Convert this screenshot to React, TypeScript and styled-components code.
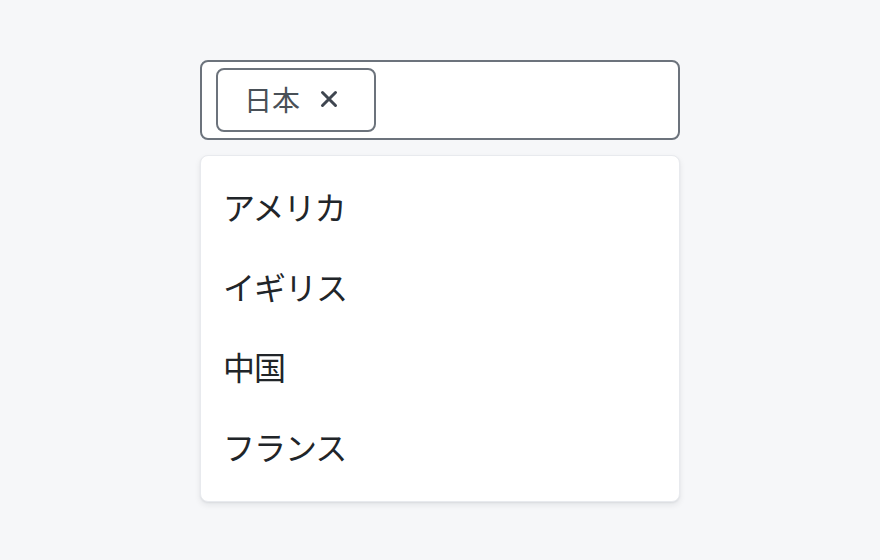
import styled, { createGlobalStyle } from "styled-components";

const GlobalStyle = createGlobalStyle`
  html, body {
    margin: 0;
    padding: 0;
    background: #f6f7f9;
    font-family: "Noto Sans CJK JP", "Noto Sans", sans-serif;
  }
`;

const Page = styled.div`
  width: 880px;
  height: 560px;
  display: flex;
  flex-direction: column;
  align-items: center;
  padding-top: 60px;
  box-sizing: border-box;
`;

const Field = styled.div`
  width: 480px;
  height: 80px;
  box-sizing: border-box;
  border: 2px solid #6c737c;
  border-radius: 8px;
  background: #fff;
  padding: 6px 14px;
  display: flex;
  align-items: center;
  gap: 8px;
`;

const Tag = styled.div`
  width: 160px;
  height: 64px;
  box-sizing: border-box;
  border: 2px solid #6c737c;
  border-radius: 8px;
  display: flex;
  align-items: center;
  padding: 0 0 2px 26px;
  gap: 19px;
  color: #495057;
  font-size: 28px;
`;

const Remove = styled.span`
  display: flex;
  align-items: center;
  color: #3f4650;
  cursor: pointer;
`;

const Menu = styled.ul`
  list-style: none;
  margin: 15px 0 0;
  width: 480px;
  box-sizing: border-box;
  padding: 10px 0 15px;
  background: #fff;
  border: 1px solid #e8eaee;
  border-radius: 8px;
  box-shadow: 0 3px 6px rgba(15, 23, 42, 0.08), 0 1px 2px rgba(15, 23, 42, 0.06);
`;

const Option = styled.li`
  height: 80px;
  display: flex;
  align-items: center;
  padding-left: 22px;
  font-size: 32px;
  letter-spacing: -1px;
  color: #212529;
`;

const options = ["アメリカ", "イギリス", "中国", "フランス"];

export default function App() {
  return (
    <>
      <GlobalStyle />
      <Page>
        <Field>
          <Tag>
            <span>日本</span>
            <Remove>
              <svg width="20" height="20" viewBox="0 0 20 20">
                <path
                  d="M3.5 3.5 L16.5 16.5 M16.5 3.5 L3.5 16.5"
                  stroke="currentColor"
                  strokeWidth="3"
                  strokeLinecap="round"
                />
              </svg>
            </Remove>
          </Tag>
        </Field>
        <Menu>
          {options.map((o) => (
            <Option key={o}>{o}</Option>
          ))}
        </Menu>
      </Page>
    </>
  );
}
